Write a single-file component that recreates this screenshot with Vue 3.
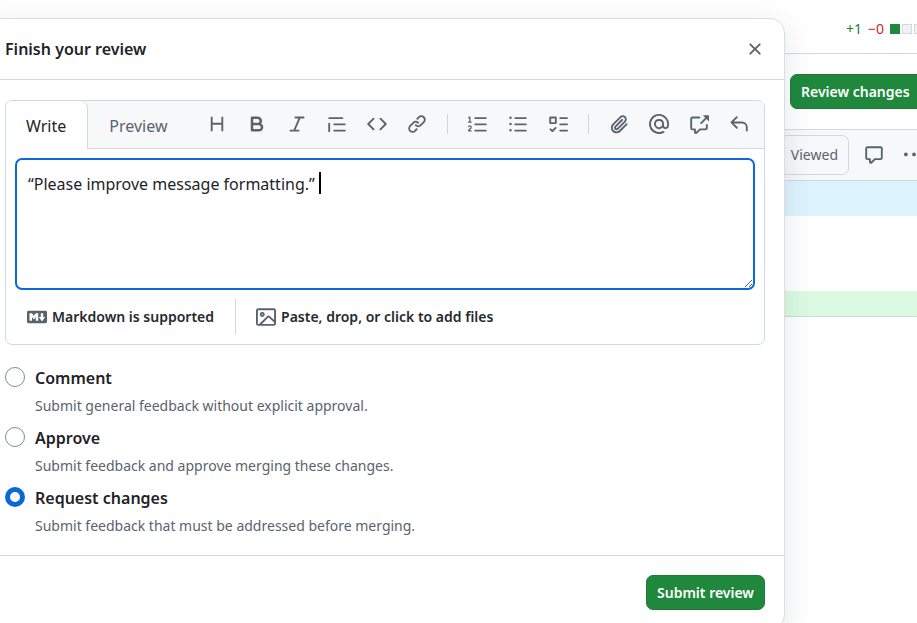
<script setup>
import { ref } from 'vue'

const message = ref('“Please improve message formatting.”')
const verdict = ref('request')

const icons = {
  heading: 'M3.75 2a.75.75 0 0 1 .75.75V7h7V2.75a.75.75 0 0 1 1.5 0v10.5a.75.75 0 0 1-1.5 0V8.5h-7v4.75a.75.75 0 0 1-1.5 0V2.75A.75.75 0 0 1 3.75 2Z',
  bold: 'M4 2h4.5a3.501 3.501 0 0 1 2.852 5.53A3.499 3.499 0 0 1 9.5 14H4a1 1 0 0 1-1-1V3a1 1 0 0 1 1-1Zm1 7v3h4.5a1.5 1.5 0 0 0 0-3Zm3.5-2a1.5 1.5 0 0 0 0-3H5v3Z',
  italic: 'M6 2.75A.75.75 0 0 1 6.75 2h6.5a.75.75 0 0 1 0 1.5h-2.505l-3.858 9H9.25a.75.75 0 0 1 0 1.5h-6.5a.75.75 0 0 1 0-1.5h2.505l3.858-9H6.75A.75.75 0 0 1 6 2.75Z',
  quote: 'M1.75 2.5h10.5a.75.75 0 0 1 0 1.5H1.75a.75.75 0 0 1 0-1.5Zm4 5h8.5a.75.75 0 0 1 0 1.5h-8.5a.75.75 0 0 1 0-1.5Zm0 5h8.5a.75.75 0 0 1 0 1.5h-8.5a.75.75 0 0 1 0-1.5ZM2.5 7.75v6a.75.75 0 0 1-1.5 0v-6a.75.75 0 0 1 1.5 0Z',
  code: 'm11.28 3.22 4.25 4.25a.75.75 0 0 1 0 1.06l-4.25 4.25a.749.749 0 0 1-1.275-.326.749.749 0 0 1 .215-.734L13.94 8l-3.72-3.72a.749.749 0 0 1 .326-1.275.749.749 0 0 1 .734.215Zm-6.56 0a.751.751 0 0 1 1.042.018.751.751 0 0 1 .018 1.042L2.06 8l3.72 3.72a.749.749 0 0 1-.326 1.275.749.749 0 0 1-.734-.215L.47 8.53a.75.75 0 0 1 0-1.06Z',
  link: 'm7.775 3.275 1.25-1.25a3.5 3.5 0 1 1 4.95 4.95l-2.5 2.5a3.5 3.5 0 0 1-4.95 0 .751.751 0 0 1 .018-1.042.751.751 0 0 1 1.042-.018 1.998 1.998 0 0 0 2.83 0l2.5-2.5a2.002 2.002 0 0 0-2.83-2.83l-1.25 1.25a.751.751 0 0 1-1.042-.018.751.751 0 0 1-.018-1.042Zm-4.69 9.64a1.998 1.998 0 0 0 2.83 0l1.25-1.25a.751.751 0 0 1 1.042.018.751.751 0 0 1 .018 1.042l-1.25 1.25a3.5 3.5 0 1 1-4.95-4.95l2.5-2.5a3.5 3.5 0 0 1 4.95 0 .751.751 0 0 1-.018 1.042.751.751 0 0 1-1.042.018 1.998 1.998 0 0 0-2.83 0l-2.5 2.5a1.998 1.998 0 0 0 0 2.83Z',
  ordered: 'M5 3.25a.75.75 0 0 1 .75-.75h8.5a.75.75 0 0 1 0 1.5h-8.5A.75.75 0 0 1 5 3.25Zm0 5a.75.75 0 0 1 .75-.75h8.5a.75.75 0 0 1 0 1.5h-8.5A.75.75 0 0 1 5 8.25Zm0 5a.75.75 0 0 1 .75-.75h8.5a.75.75 0 0 1 0 1.5h-8.5a.75.75 0 0 1-.75-.75ZM.924 10.32a.5.5 0 0 1-.851-.525l.001-.001.001-.002.002-.004.007-.011c.097-.144.215-.273.348-.384.228-.19.588-.392 1.068-.392.468 0 .858.181 1.126.484.259.294.377.673.377 1.038 0 .987-.686 1.495-1.156 1.845l-.047.035c-.303.225-.522.4-.654.597h1.357a.5.5 0 0 1 0 1H.5a.5.5 0 0 1-.5-.5c0-1.005.692-1.52 1.167-1.875l.035-.025c.531-.396.8-.625.8-1.078a.57.57 0 0 0-.128-.376C1.806 10.068 1.695 10 1.5 10a.658.658 0 0 0-.429.163.835.835 0 0 0-.144.153ZM2.003 2.5V6h.503a.5.5 0 0 1 0 1H.5a.5.5 0 0 1 0-1h.503V3.308l-.28.14a.5.5 0 0 1-.446-.895l1.003-.5a.5.5 0 0 1 .723.447Z',
  unordered: 'M5.75 2.5h8.5a.75.75 0 0 1 0 1.5h-8.5a.75.75 0 0 1 0-1.5Zm0 5h8.5a.75.75 0 0 1 0 1.5h-8.5a.75.75 0 0 1 0-1.5Zm0 5h8.5a.75.75 0 0 1 0 1.5h-8.5a.75.75 0 0 1 0-1.5ZM2 14a1 1 0 1 1 0-2 1 1 0 0 1 0 2Zm1-6a1 1 0 1 1-2 0 1 1 0 0 1 2 0ZM2 4a1 1 0 1 1 0-2 1 1 0 0 1 0 2Z',
  tasks: 'M2 2h4a1 1 0 0 1 1 1v4a1 1 0 0 1-1 1H2a1 1 0 0 1-1-1V3a1 1 0 0 1 1-1Zm4.655 8.595a.75.75 0 0 1 0 1.06L4.03 14.28a.75.75 0 0 1-1.06 0l-1.5-1.5a.749.749 0 0 1 .326-1.275.749.749 0 0 1 .734.215l.97.97 2.095-2.095a.75.75 0 0 1 1.06 0ZM9.75 2.5h5.5a.75.75 0 0 1 0 1.5h-5.5a.75.75 0 0 1 0-1.5Zm0 5h5.5a.75.75 0 0 1 0 1.5h-5.5a.75.75 0 0 1 0-1.5Zm0 5h5.5a.75.75 0 0 1 0 1.5h-5.5a.75.75 0 0 1 0-1.5Zm-7.25-9v3h3v-3Z',
  clip: 'M12.212 3.02a1.753 1.753 0 0 0-2.478.003l-5.83 5.83a3.007 3.007 0 0 0-.88 2.127c0 .795.315 1.551.88 2.116.567.567 1.333.89 2.126.89.79 0 1.548-.321 2.116-.89l5.48-5.48a.75.75 0 0 1 1.061 1.06l-5.48 5.48a4.492 4.492 0 0 1-3.177 1.33c-1.2 0-2.345-.487-3.187-1.33a4.483 4.483 0 0 1-1.32-3.177c0-1.195.475-2.341 1.32-3.186l5.83-5.83a3.25 3.25 0 0 1 5.553 2.297c0 .863-.343 1.691-.953 2.301L7.439 12.39c-.375.377-.884.59-1.416.593a1.998 1.998 0 0 1-1.412-.593 1.992 1.992 0 0 1 0-2.828l5.48-5.48a.751.751 0 0 1 1.042.018.751.751 0 0 1 .018 1.042l-5.48 5.48a.492.492 0 0 0 0 .707.499.499 0 0 0 .352.154.51.51 0 0 0 .356-.154l5.833-5.827a1.755 1.755 0 0 0 0-2.481Z',
  mention: 'M4.75 2.37a6.501 6.501 0 0 0 6.5 11.26.75.75 0 0 1 .75 1.298A7.999 7.999 0 0 1 .989 4.148 8 8 0 0 1 16 7.75v1.5a2.75 2.75 0 0 1-5.072 1.475 3.999 3.999 0 0 1-6.65-4.19A4 4 0 0 1 12 8v1.25a1.25 1.25 0 0 0 2.5 0V7.867a6.5 6.5 0 0 0-9.75-5.496ZM10.5 8a2.5 2.5 0 1 0-5 0 2.5 2.5 0 0 0 5 0Z',
  reference: 'M2.75 3.5a.25.25 0 0 0-.25.25v7.5c0 .138.112.25.25.25h2a.75.75 0 0 1 .75.75v2.19l2.72-2.72a.749.749 0 0 1 .53-.22h4.5a.25.25 0 0 0 .25-.25v-2.5a.75.75 0 0 1 1.5 0v2.5A1.75 1.75 0 0 1 13.25 13H9.06l-2.573 2.573A1.458 1.458 0 0 1 4 14.543V13H2.75A1.75 1.75 0 0 1 1 11.25v-7.5C1 2.784 1.784 2 2.75 2h5.5a.75.75 0 0 1 0 1.5ZM16 1.25v4.146a.25.25 0 0 1-.427.177L14.03 4.03l-3.75 3.75a.749.749 0 0 1-1.275-.326.749.749 0 0 1 .215-.734l3.75-3.75-1.543-1.543A.25.25 0 0 1 11.604 1h4.146a.25.25 0 0 1 .25.25Z',
  reply: 'M6.78 1.97a.75.75 0 0 1 0 1.06L3.81 6h6.44A4.75 4.75 0 0 1 15 10.75v2.5a.75.75 0 0 1-1.5 0v-2.5a3.25 3.25 0 0 0-3.25-3.25H3.81l2.97 2.97a.749.749 0 0 1-.326 1.275.749.749 0 0 1-.734-.215L1.47 7.28a.75.75 0 0 1 0-1.06l4.25-4.25a.75.75 0 0 1 1.06 0Z',
  close: 'M3.72 3.72a.75.75 0 0 1 1.06 0L8 6.94l3.22-3.22a.749.749 0 0 1 1.275.326.749.749 0 0 1-.215.734L9.06 8l3.22 3.22a.749.749 0 0 1-.326 1.275.749.749 0 0 1-.734-.215L8 9.06l-3.22 3.22a.751.751 0 0 1-1.042-.018.751.751 0 0 1-.018-1.042L6.94 8 3.72 4.78a.75.75 0 0 1 0-1.06Z',
  markdown: 'M14.85 3c.63 0 1.15.52 1.14 1.15v7.7c0 .63-.51 1.15-1.15 1.15H1.15C.52 13 0 12.48 0 11.84V4.15C0 3.52.52 3 1.15 3ZM9 11V5H7L5.5 7 4 5H2v6h2V8l1.5 1.92L7 8v3Zm2.99.5L14.5 8H13V5h-2v3H9.5Z',
  image: 'M16 13.25A1.75 1.75 0 0 1 14.25 15H1.75A1.75 1.75 0 0 1 0 13.25V2.75C0 1.784.784 1 1.75 1h12.5c.966 0 1.75.784 1.75 1.75ZM1.75 2.5a.25.25 0 0 0-.25.25v10.5c0 .138.112.25.25.25h.94l.03-.03 6.077-6.078a1.75 1.75 0 0 1 2.412-.06L14.5 10.31V2.75a.25.25 0 0 0-.25-.25Zm12.5 11a.25.25 0 0 0 .25-.25v-.917l-4.298-3.889a.25.25 0 0 0-.344.009L4.81 13.5ZM7 6a2 2 0 1 1-3.999.001A2 2 0 0 1 7 6ZM5.5 6a.5.5 0 1 0-1 0 .5.5 0 0 0 1 0Z',
  comment: 'M1 2.75C1 1.784 1.784 1 2.75 1h10.5c.966 0 1.75.784 1.75 1.75v7.5A1.75 1.75 0 0 1 13.25 12H9.06l-2.573 2.573A1.458 1.458 0 0 1 4 13.543V12H2.75A1.75 1.75 0 0 1 1 10.25Zm1.75-.25a.25.25 0 0 0-.25.25v7.5c0 .138.112.25.25.25h2a.75.75 0 0 1 .75.75v2.19l2.72-2.72a.749.749 0 0 1 .53-.22h4.5a.25.25 0 0 0 .25-.25v-7.5a.25.25 0 0 0-.25-.25Z',
  kebab: 'M8 9a1.5 1.5 0 1 0 0-3 1.5 1.5 0 0 0 0 3ZM1.5 9a1.5 1.5 0 1 0 0-3 1.5 1.5 0 0 0 0 3Zm13 0a1.5 1.5 0 1 0 0-3 1.5 1.5 0 0 0 0 3Z'
}

const toolGroups = [
  ['heading', 'bold', 'italic', 'quote', 'code', 'link'],
  ['ordered', 'unordered', 'tasks'],
  ['clip', 'mention', 'reference', 'reply']
]

const options = [
  { id: 'comment', title: 'Comment', hint: 'Submit general feedback without explicit approval.' },
  { id: 'approve', title: 'Approve', hint: 'Submit feedback and approve merging these changes.' },
  { id: 'request', title: 'Request changes', hint: 'Submit feedback that must be addressed before merging.' }
]
</script>

<template>
  <div class="page">
    <main class="diff">
      <div class="row stats">
        <div class="stat-group">
          <span class="added">+1</span>
          <span class="removed">−0</span>
          <span class="blocks"><i class="block filled"></i><i class="block"></i><i class="block"></i></span>
        </div>
      </div>
      <div class="row actions">
        <div class="action-group">
          <button type="button" class="primary wide">Review changes</button>
        </div>
      </div>
      <div class="row file-head">
        <button type="button" class="viewed">Viewed</button>
        <div class="file-tools">
          <button type="button" class="plain" aria-label="Comment on file">
            <svg class="icon" viewBox="0 0 16 16"><path :d="icons.comment" /></svg>
          </button>
          <button type="button" class="plain" aria-label="More options">
            <svg class="icon" viewBox="0 0 16 16"><path :d="icons.kebab" /></svg>
          </button>
        </div>
      </div>
      <div class="hunk"></div>
      <div class="context"></div>
      <div class="addition"></div>
    </main>

    <form class="dialog" role="dialog" aria-labelledby="dialog-title" @submit.prevent>
      <header class="dialog-head">
        <h1 id="dialog-title">Finish your review</h1>
        <button type="button" class="plain" aria-label="Close">
          <svg class="icon" viewBox="0 0 16 16"><path :d="icons.close" /></svg>
        </button>
      </header>

      <div class="dialog-body">
        <section class="editor">
          <div class="editor-bar">
            <button type="button" class="tab selected">Write</button>
            <button type="button" class="tab">Preview</button>
            <div class="tools">
              <div v-for="(group, i) in toolGroups" :key="i" class="tool-group">
                <button v-for="name in group" :key="name" type="button" class="tool" :aria-label="name">
                  <svg class="icon" viewBox="0 0 16 16"><path :d="icons[name]" /></svg>
                </button>
              </div>
            </div>
          </div>
          <div class="field">
            <textarea v-model="message" aria-label="Review message" spellcheck="false"></textarea>
            <span class="caret"></span>
          </div>
          <div class="editor-foot">
            <a href="#markdown" class="foot-item">
              <svg class="icon" viewBox="0 0 16 16"><path :d="icons.markdown" /></svg>
              Markdown is supported
            </a>
            <button type="button" class="foot-item">
              <svg class="icon" viewBox="0 0 16 16"><path :d="icons.image" /></svg>
              Paste, drop, or click to add files
            </button>
          </div>
        </section>

        <div class="options">
          <div v-for="o in options" :key="o.id" class="option">
            <input :id="o.id" v-model="verdict" type="radio" name="verdict" :value="o.id" />
            <div class="option-text">
              <label :for="o.id">{{ o.title }}</label>
              <p>{{ o.hint }}</p>
            </div>
          </div>
        </div>
      </div>

      <footer class="dialog-foot">
        <button type="submit" class="primary">Submit review</button>
      </footer>
    </form>
  </div>
</template>

<style>
body {
  margin: 0;
  background: #fff;
}
</style>

<style scoped>
* {
  box-sizing: border-box;
}
.page {
  position: relative;
  height: 100vh;
  overflow: hidden;
  color: #1f2328;
  font-family: "Noto Sans", "Open Sans", sans-serif;
  font-size: 14px;
  line-height: 20px;
}
button {
  margin: 0;
  font: inherit;
  color: inherit;
  cursor: pointer;
}
.icon {
  display: block;
  flex: none;
  width: 20px;
  height: 20px;
  fill: #59636e;
}
.plain {
  padding: 0;
  border: 0;
  background: none;
}

.row {
  display: flex;
  align-items: center;
  justify-content: flex-end;
  border-bottom: 1px solid #d1d9e0;
}
.stats {
  height: 54px;
  padding-top: 4px;
}
.stat-group {
  display: flex;
  align-items: center;
  gap: 6px;
  width: 71px;
}
.added {
  color: #1a7f37;
}
.removed {
  color: #d1242f;
}
.blocks {
  display: flex;
  gap: 2px;
}
.block {
  width: 10px;
  height: 10px;
  border: 1px solid #d1d9e0;
  background: #f0f2f4;
}
.block.filled {
  border-color: #1f883d;
  background: #1f883d;
}
.actions {
  height: 76px;
}
.action-group {
  width: 127px;
}
.primary {
  height: 35px;
  padding: 0 10px;
  border: 1px solid #1f7a38;
  border-radius: 7px;
  background: #1f883d;
  color: #fff;
  font-weight: 600;
  white-space: nowrap;
}
.wide {
  width: 140px;
  text-align: left;
}
.file-head {
  height: 51px;
  background: #f6f8fa;
}
.viewed {
  height: 40px;
  padding: 0 10px;
  border: 1px solid #d1d9e0;
  border-radius: 7px;
  background: none;
  color: #59636e;
}
.file-tools {
  display: flex;
  gap: 20px;
  width: 68px;
  padding-left: 15px;
}
.hunk {
  height: 35px;
  background: #ddf4ff;
}
.context {
  height: 75px;
}
.addition {
  height: 26px;
  border-bottom: 1px solid #d1d9e0;
  background: #dafbe1;
}

.dialog {
  position: absolute;
  top: 18px;
  left: -15px;
  right: 132px;
  border: 1px solid #d8dee4;
  border-radius: 15px;
  background: #fff;
  box-shadow: 0 8px 30px rgba(66, 74, 83, 0.14);
}
.dialog-head {
  display: flex;
  align-items: center;
  justify-content: space-between;
  height: 61px;
  padding: 0 19px;
  border-bottom: 1px solid #d1d9e0;
}
h1 {
  margin: 0;
  font-size: 16px;
  font-weight: 600;
  line-height: 22px;
}
.dialog-body {
  padding: 20px 19px 10px;
}
.editor {
  border: 1px solid #d1d9e0;
  border-radius: 7px;
}
.editor-bar {
  display: flex;
  height: 48px;
  border-bottom: 1px solid #d1d9e0;
  border-radius: 6px 6px 0 0;
  background: #f6f8fa;
}
.tab {
  height: 48px;
  padding: 2px 21px 0;
  border: 0;
  background: none;
  color: #59636e;
  font-size: 16px;
}
.tab.selected {
  padding: 2px 21px 0 20px;
  border-right: 1px solid #d1d9e0;
  border-radius: 6px 7px 0 0;
  background: #fff;
  color: #1f2328;
}
.tools {
  display: flex;
  flex: 1;
  justify-content: flex-end;
  align-items: center;
  padding: 0 5px 1px 0;
}
.tool-group {
  display: flex;
  align-items: center;
}
.tool-group + .tool-group::before {
  content: "";
  width: 1px;
  height: 20px;
  margin: 0 10px;
  background: #d1d9e0;
}
.tool {
  padding: 10px;
  border: 0;
  background: none;
}
.field {
  position: relative;
  padding: 9px;
}
textarea {
  display: block;
  width: 100%;
  height: 132px;
  padding: 11px;
  border: 2px solid #0969da;
  border-radius: 7px;
  outline: 0;
  background: #fff;
  color: #1f2328;
  font: inherit;
  font-size: 16px;
  line-height: 26px;
  resize: vertical;
}
.caret {
  position: absolute;
  top: 23px;
  left: 313px;
  width: 2px;
  height: 22px;
  background: #000;
}
.editor-foot {
  display: flex;
  align-items: center;
  padding: 0 0 10px;
}
.foot-item {
  display: flex;
  align-items: center;
  gap: 5px;
  height: 35px;
  padding: 0 21px;
  border: 0;
  background: none;
  color: #25292e;
  font-weight: 600;
  text-decoration: none;
}
.foot-item + .foot-item {
  padding: 0 20px;
  border-left: 1px solid #d1d9e0;
}
.options {
  padding-top: 20px;
}
.option {
  display: flex;
  gap: 10px;
  height: 60px;
}
input[type="radio"] {
  appearance: none;
  flex: none;
  width: 20px;
  height: 20px;
  margin: 2px 0 0;
  border: 1px solid #818b98;
  border-radius: 50%;
  background: #fff;
}
input[type="radio"]:checked {
  border: 5px solid #0969da;
}
label {
  display: block;
  font-size: 16px;
  font-weight: 600;
  line-height: 26px;
}
.option-text p {
  margin: 5px 0 0;
  color: #59636e;
}
.dialog-foot {
  display: flex;
  justify-content: flex-end;
  padding: 19px;
  border-top: 1px solid #d1d9e0;
}
</style>
